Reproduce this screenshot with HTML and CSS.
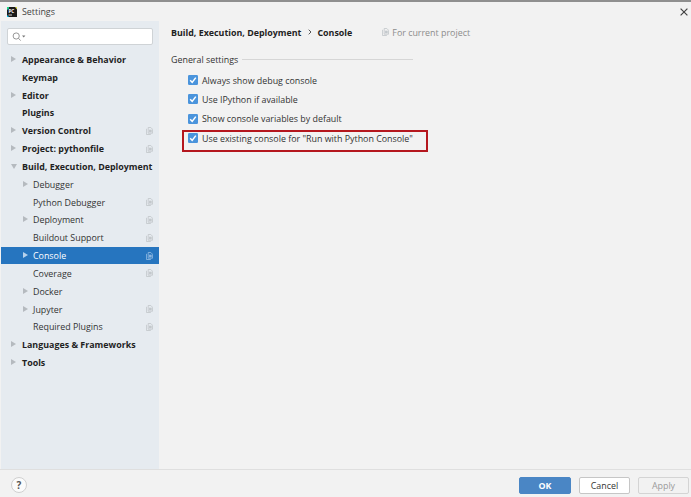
FILE: index.html
```html
<!DOCTYPE html>
<html lang="en">
<head>
<meta charset="utf-8">
<title>Settings</title>
<link rel="stylesheet" href="styles.css">
</head>
<body>
<svg class="defs" width="0" height="0" aria-hidden="true">
  <symbol id="copy" viewBox="0 0 8 9">
    <path d="M2.5 .5h3l2 2v4.5h-5z" fill="none" stroke="currentColor" stroke-width="1"/>
    <path d="M.5 2v6.5h5" fill="none" stroke="currentColor" stroke-width="1"/>
    <path d="M3.5 3h3v3h-3z" fill="currentColor"/>
  </symbol>
  <symbol id="check" viewBox="0 0 10 10">
    <rect width="10" height="10" rx="1.2" fill="#4a94dc"/>
    <path d="M2.2 5.2l2 2.2 3.6-4.8" fill="none" stroke="#fff" stroke-width="1.5"/>
  </symbol>
</svg>
<div class="window">
  <header class="titlebar">
    <svg class="logo" viewBox="0 0 10 10" aria-hidden="true">
      <rect width="10" height="10" fill="#1a1a1a"/>
      <path d="M0 0h2v1.5L0 3z" fill="#21d789"/>
      <path d="M10 0v2.5L8 0z" fill="#d9d84a"/>
      <path d="M0 10V8l2 2z" fill="#07c3f2"/>
      <text x="1.4" y="5.6" class="logo-text">PC</text>
      <rect x="1.5" y="7.6" width="3.5" height=".8" fill="#fff"/>
    </svg>
    <span class="title">Settings</span>
    <svg class="close" viewBox="0 0 8 8" aria-hidden="true"><path d="M.6 .6l6.8 6.8M7.4 .6L.6 7.4" stroke="#444" stroke-width="1.2"/></svg>
  </header>
  <div class="body">
    <aside class="sidebar">
      <div class="search">
        <svg class="search-icon" viewBox="0 0 14 9" aria-hidden="true">
          <circle cx="4.2" cy="4" r="3.1" fill="none" stroke="#8b8b8b" stroke-width=".9"/>
          <path d="M6.5 6.3L8.6 8.6" stroke="#8b8b8b" stroke-width=".9"/>
          <path d="M10 3.5h3.4l-1.7 2z" fill="#777"/>
        </svg>
      </div>
      <ul class="tree">
        <li class="row top"><i class="arrow"></i><span>Appearance &amp; Behavior</span></li>
        <li class="row top"><span>Keymap</span></li>
        <li class="row top"><i class="arrow"></i><span>Editor</span></li>
        <li class="row top"><span>Plugins</span></li>
        <li class="row top"><i class="arrow"></i><span>Version Control</span><svg class="copy"><use href="#copy"/></svg></li>
        <li class="row top"><i class="arrow"></i><span>Project: pythonfile</span><svg class="copy"><use href="#copy"/></svg></li>
        <li class="row top"><i class="arrow down"></i><span>Build, Execution, Deployment</span></li>
        <li class="row sub"><i class="arrow"></i><span>Debugger</span></li>
        <li class="row sub"><span>Python Debugger</span><svg class="copy"><use href="#copy"/></svg></li>
        <li class="row sub"><i class="arrow"></i><span>Deployment</span><svg class="copy"><use href="#copy"/></svg></li>
        <li class="row sub"><span>Buildout Support</span><svg class="copy"><use href="#copy"/></svg></li>
        <li class="row sub selected"><i class="arrow"></i><span>Console</span><svg class="copy"><use href="#copy"/></svg></li>
        <li class="row sub"><span>Coverage</span><svg class="copy"><use href="#copy"/></svg></li>
        <li class="row sub"><i class="arrow"></i><span>Docker</span></li>
        <li class="row sub"><i class="arrow"></i><span>Jupyter</span><svg class="copy"><use href="#copy"/></svg></li>
        <li class="row sub"><span>Required Plugins</span><svg class="copy"><use href="#copy"/></svg></li>
        <li class="row top"><i class="arrow"></i><span>Languages &amp; Frameworks</span></li>
        <li class="row top"><i class="arrow"></i><span>Tools</span></li>
      </ul>
    </aside>
    <main class="content">
      <div class="crumbs">
        <b>Build, Execution, Deployment</b>
        <svg class="chev" viewBox="0 0 4 6" aria-hidden="true"><path d="M.7 .7L3 3 .7 5.3" fill="none" stroke="#444" stroke-width=".9"/></svg>
        <b>Console</b>
        <span class="scope"><svg class="copy"><use href="#copy"/></svg>For current project</span>
      </div>
      <div class="group"><span>General settings</span><hr></div>
      <ul class="options">
        <li class="option"><svg class="box"><use href="#check"/></svg>Always show debug console</li>
        <li class="option"><svg class="box"><use href="#check"/></svg>Use IPython if available</li>
        <li class="option"><svg class="box"><use href="#check"/></svg>Show console variables by default</li>
        <li class="option marked"><svg class="box"><use href="#check"/></svg>Use existing console for "Run with Python Console"</li>
      </ul>
    </main>
  </div>
  <footer class="footer">
    <button class="help" type="button">?</button>
    <div class="actions">
      <button class="btn primary" type="button">OK</button>
      <button class="btn" type="button">Cancel</button>
      <button class="btn disabled" type="button">Apply</button>
    </div>
  </footer>
</div>
</body>
</html>
```
FILE: styles.css
```css
* { box-sizing: border-box; }
html, body { margin: 0; height: 100%; }
body {
  font-family: "Open Sans", "Noto Sans", sans-serif;
  font-size: 8.9px;
  color: #2c2c2c;
  background: #f2f2f2;
}
.defs { display: block; height: 0; }
ul { list-style: none; margin: 0; padding: 0; }
.window {
  width: 691px;
  height: 497px;
  display: flex;
  flex-direction: column;
  border-top: 2px solid #8f8f8f;
  overflow: hidden;
}
.titlebar {
  height: 19px;
  flex: none;
  display: flex;
  align-items: center;
  padding: 0 3px 0 7px;
  background: #f2f2f2;
}
.logo { width: 10px; height: 10px; }
.logo-text { font: 700 4.6px "Open Sans", sans-serif; fill: #fff; }
.title { margin-left: 5px; color: #444; }
.close { width: 8px; height: 8px; margin-left: auto; }
.body { flex: 1; display: flex; min-height: 0; }
.sidebar {
  width: 158px;
  margin-left: 1px;
  flex: none;
  background: #e6ebf0;
  padding-top: 7px;
}
.search {
  height: 17px;
  margin: 0 6px;
  background: #fff;
  border: 1px solid #cfd3d6;
  border-radius: 2px;
  display: flex;
  align-items: center;
  padding-left: 4px;
}
.search-icon { width: 14px; height: 9px; }
.tree { margin-top: 5.5px; }
.row {
  height: 17.83px;
  display: flex;
  align-items: center;
  padding-left: 21px;
  padding-right: 6px;
  position: relative;
  white-space: nowrap;
}
.row.top { font-weight: 700; color: #1f1f1f; }
.row.sub { padding-left: 32px; color: #333; }
.row.selected { background: #2675bf; color: #fff; }
.arrow {
  position: absolute;
  left: 10px;
  top: 5.5px;
  width: 0;
  height: 0;
  border-left: 5px solid #b5babf;
  border-top: 3.2px solid transparent;
  border-bottom: 3.2px solid transparent;
}
.arrow.down {
  left: 9.5px;
  top: 7px;
  border-top: 5px solid #b5babf;
  border-bottom: 0;
  border-left: 3.2px solid transparent;
  border-right: 3.2px solid transparent;
}
.sub .arrow { left: 22px; }
.selected .arrow { border-left-color: #b7d2ec; }
.copy { width: 7px; height: 8px; color: #c3c8cc; }
.row .copy { margin-left: auto; }
.selected .copy { color: #8db7e0; }
.content { flex: 1; padding: 3px 0 0 12px; min-width: 0; }
.crumbs { height: 16px; display: flex; align-items: center; color: #1f1f1f; white-space: nowrap; }
.crumbs b { font-weight: 700; }
.chev { width: 4px; height: 6px; margin: 0 5px 0 7px; }
.scope { margin-left: 30px; color: #8c8c8c; display: flex; align-items: center; gap: 3px; }
.group { display: flex; align-items: center; margin-top: 12px; height: 15px; color: #333; }
.group hr { width: 171px; margin: 0 0 0 4px; border: 0; border-top: 1px solid #d6d6d6; }
.options { margin-top: 3.5px; padding-left: 17px; }
.option {
  height: 19.3px;
  display: flex;
  align-items: center;
  color: #333;
  white-space: nowrap;
  position: relative;
}
.box { width: 10px; height: 10px; margin-right: 4px; flex: none; }
.marked::after {
  content: "";
  box-sizing: border-box;
  position: absolute;
  left: -6px;
  top: 1.5px;
  width: 246px;
  height: 22px;
  border: 2px solid #b5171e;
}
.footer {
  height: 28px;
  flex: none;
  display: flex;
  align-items: center;
  justify-content: space-between;
  padding: 3px 2px 0 11px;
  background: #f2f2f2;
  border-top: 1px solid #dfdfdf;
}
.help {
  width: 16px;
  height: 16px;
  padding: 0;
  border: 1px solid #d0d0d0;
  border-radius: 50%;
  background: #fbfbfb;
  font: 700 10px "Open Sans", sans-serif;
  color: #555;
}
.actions { display: flex; gap: 8px; }
.btn {
  width: 51px;
  height: 17px;
  padding: 0;
  border: 1px solid #c6c6c6;
  border-radius: 2px;
  background: #fff;
  font: 8.9px "Open Sans", sans-serif;
  color: #333;
}
.primary { background: #4a86c5; border-color: #4a86c5; color: #fff; font-weight: 700; width: 52px; }
.disabled { background: #f2f2f2; border-color: #d4d4d4; color: #9a9a9a; }
```
